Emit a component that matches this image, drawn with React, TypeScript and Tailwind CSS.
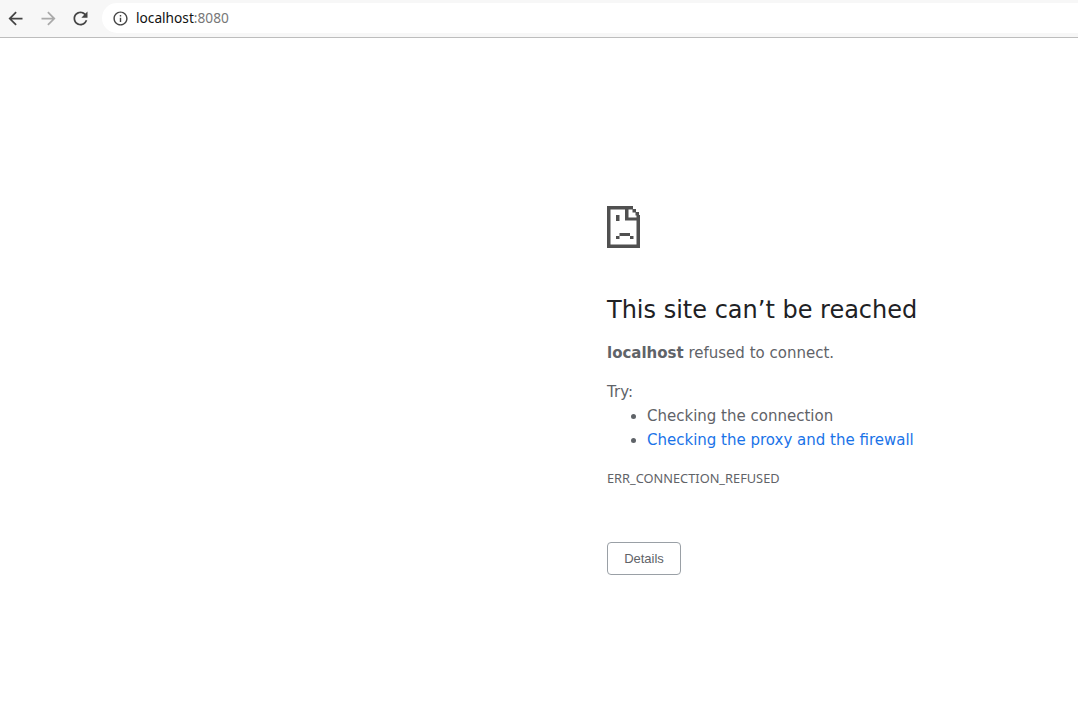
function SadTab() {
  return (
    <svg width="33" height="42" viewBox="0 0 33 42" className="block" fill="#505050">
      <path
        fillRule="evenodd"
        d="M0 0H26V3H29V6H32V9H33V42H0ZM3.5 3.5V38.5H29.5V14.5H18V3.5ZM21.5 3.5V11.5H29.5V9.5H28.5V6.5H25.5V3.5Z"
      />
      <rect x="9" y="9" width="3.5" height="6" />
      <rect x="12.5" y="27" width="10.5" height="3" />
      <rect x="9" y="30" width="3.5" height="3" />
      <rect x="23" y="30" width="3.5" height="3" />
    </svg>
  );
}

function MaterialIcon({ d, size, className }: { d: string; size: number; className: string }) {
  return (
    <svg width={size} height={size} viewBox="0 0 24 24" fill="currentColor" className={className}>
      <path d={d} />
    </svg>
  );
}

const back = "M20 11H7.83l5.59-5.59L12 4l-8 8 8 8 1.41-1.41L7.83 13H20v-2z";
const forward = "M12 4l-1.41 1.41L16.17 11H4v2h12.17l-5.58 5.59L12 20l8-8z";
const reload =
  "M17.65 6.35C16.2 4.9 14.21 4 12 4c-4.42 0-7.99 3.58-7.99 8s3.57 8 7.99 8c3.73 0 6.84-2.55 7.73-6h-2.08c-.82 2.33-3.04 4-5.65 4-3.31 0-6-2.69-6-6s2.69-6 6-6c1.66 0 3.14.69 4.22 1.78L13 11h7V4l-2.35 2.35z";
const info =
  "M11 7h2v2h-2zm0 4h2v6h-2zm1-9C6.48 2 2 6.48 2 12s4.48 10 10 10 10-4.48 10-10S17.52 2 12 2zm0 18c-4.41 0-8-3.59-8-8s3.59-8 8-8 8 3.59 8 8-3.59 8-8 8z";

export default function App() {
  return (
    <div className="flex h-[709px] w-[1078px] flex-col overflow-hidden bg-white font-['DejaVu_Sans',sans-serif]">
      <header className="flex h-[38px] shrink-0 items-center border-b border-[#bdbdbd] bg-[#f7f7f7] pb-[1px]">
        <div className="flex w-[102px] items-center pl-[5px]">
          <MaterialIcon d={back} size={21} className="text-[#444]" />
          <MaterialIcon d={forward} size={21} className="ml-[12px] text-[#aaa]" />
          <MaterialIcon d={reload} size={21} className="ml-[11px] text-[#444]" />
        </div>
        <div className="flex h-[30px] flex-1 items-center rounded-l-[15px] bg-white pl-[10px]">
          <MaterialIcon d={info} size={17} className="text-[#444]" />
          <span className="ml-[7px] font-['Noto_Sans',sans-serif] text-[13.7px] text-[#111]">
            localhost<span className="text-[#777]">:8080</span>
          </span>
        </div>
      </header>
      <main className="pl-[607px] pt-[168px] text-[15px] leading-[24px] text-[#5f6368]">
        <SadTab />
        <h1 className="mt-[47px] text-[24px] leading-[30px] font-normal text-[#202124]">This site can’t be reached</h1>
        <p className="mt-[16px]">
          <strong className="font-bold">localhost</strong> refused to connect.
        </p>
        <p className="mt-[15px]">Try:</p>
        <ul className="list-disc pl-[40px]">
          <li>Checking the connection</li>
          <li className="marker:text-[#5f6368]">
            <a className="text-[#1a73e8]">Checking the proxy and the firewall</a>
          </li>
        </ul>
        <div className="mt-[14px] font-['Noto_Sans',sans-serif] text-[12.8px] leading-[24px]">ERR_CONNECTION_REFUSED</div>
        <button className="mt-[52px] flex h-[33px] w-[74px] items-center justify-center rounded-[4px] border border-[#9aa0a6] bg-white font-['Liberation_Sans',sans-serif] text-[13px] text-[#5f6368]">
          Details
        </button>
      </main>
    </div>
  );
}
